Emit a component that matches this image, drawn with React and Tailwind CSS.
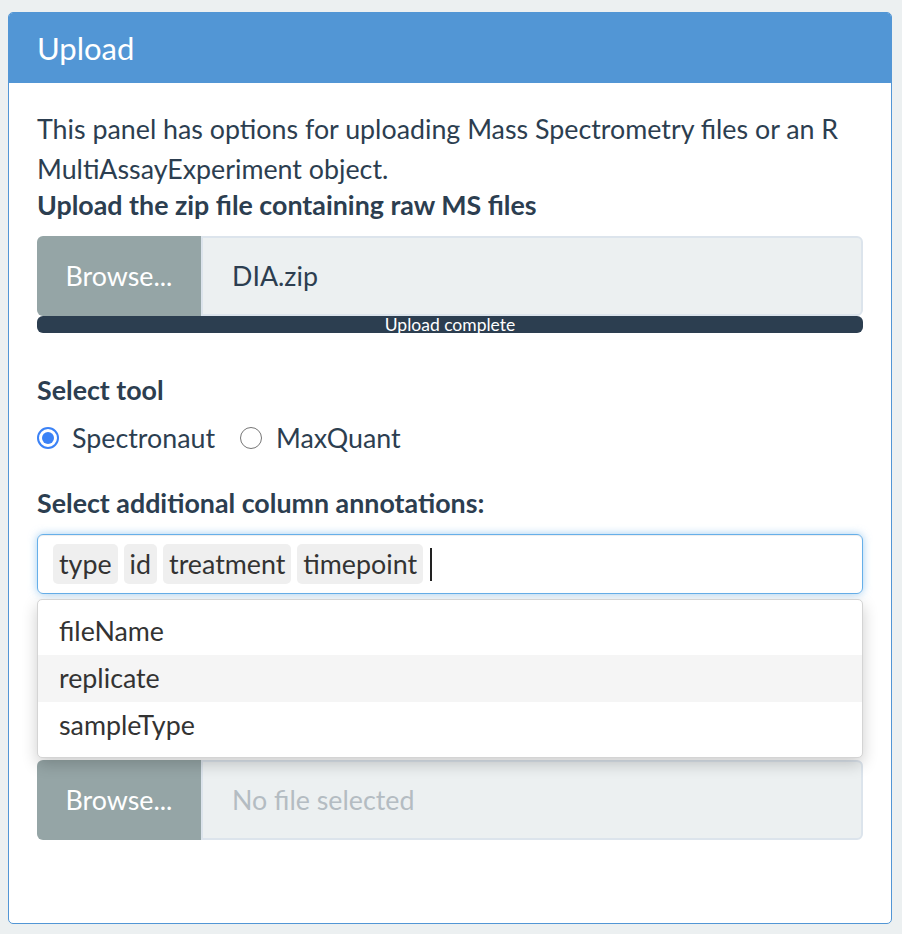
export default function App() {
  const font = { fontFamily: "Lato, 'Noto Sans', sans-serif" };
  return (
    <div className="min-h-[934px] w-[902px] bg-[#ecf0f1] pt-[12px] pl-[8px] text-[#2c3e50]" style={font}>
      <div className="w-[884px] h-[912px] rounded-[5px] border border-[#5296d5] bg-white overflow-hidden flex flex-col">
        <div className="h-[70px] shrink-0 bg-[#5296d5] px-[28px] flex items-center text-white text-[31px] leading-none">
          Upload
        </div>
        <div className="px-[28px] pt-[26px] relative flex-1 text-[26.8px]">
          <p className="leading-[40px] m-0">
            This panel has options for uploading Mass Spectrometry files or an R MultiAssayExperiment object.
          </p>
          <div className="leading-[32px] font-bold">Upload the zip file containing raw MS files</div>
          <div className="mt-[15px] flex h-[80px]">
            <div className="w-[164px] bg-[#95a5a6] rounded-l-[6px] flex items-center justify-center text-white">
              Browse...
            </div>
            <div className="flex-1 bg-[#ecf0f1] border-[2px] border-[#dce4ec] rounded-r-[6px] flex items-center pl-[29px] text-[#2c3e50]">
              DIA.zip
            </div>
          </div>
          <div className="h-[17px] rounded-[6px] bg-[#2c3e50] text-white text-[17.5px] leading-[17px] text-center">
            Upload complete
          </div>
          <div className="mt-[41px] leading-[32px] font-bold">Select tool</div>
          <div className="mt-[12px] flex items-center leading-[40px]">
            <span className="w-[22px] h-[22px] rounded-full border-[2px] border-[#3b82f6] flex items-center justify-center">
              <span className="w-[12px] h-[12px] rounded-full bg-[#3b82f6]" />
            </span>
            <span className="ml-[13px]">Spectronaut</span>
            <span className="ml-[25px] w-[22px] h-[22px] rounded-full border-[1.5px] border-[#767676]" />
            <span className="ml-[14px]">MaxQuant</span>
          </div>
          <div className="mt-[29px] leading-[32px] font-bold">Select additional column annotations:</div>
          <div className="mt-[15px] h-[60px] rounded-[6px] border border-[#66afe9] shadow-[inset_0_1px_1px_rgba(0,0,0,0.075),0_0_8px_rgba(102,175,233,0.6)] flex items-center pl-[15px] gap-[6px] text-[#333]">
            <span className="h-[40px] px-[6px] rounded-[5px] bg-[#efefef] flex items-center">type</span>
            <span className="h-[40px] px-[6px] rounded-[5px] bg-[#efefef] flex items-center">id</span>
            <span className="h-[40px] px-[6px] rounded-[5px] bg-[#efefef] flex items-center">treatment</span>
            <span className="h-[40px] px-[6px] rounded-[5px] bg-[#efefef] flex items-center">timepoint</span>
            <span className="ml-[1px] w-[2px] h-[33px] bg-[#222]" />
          </div>
          <div className="h-[166px]" />
          <div className="flex h-[80px]">
            <div className="w-[164px] bg-[#95a5a6] rounded-l-[6px] flex items-center justify-center text-white">
              Browse...
            </div>
            <div className="flex-1 bg-[#ecf0f1] border-[2px] border-[#dce4ec] rounded-r-[6px] flex items-center pl-[29px] text-[#b4bcc2]">
              No file selected
            </div>
          </div>
          <div className="absolute left-[28px] right-[28px] top-[516px] h-[159px] bg-white rounded-[5px] border border-[#d4d4d4] shadow-[0_6px_16px_rgba(0,0,0,0.2)] py-[8px] text-[#333]">
            <div className="h-[47px] flex items-center pl-[21px]">fileName</div>
            <div className="h-[47px] flex items-center pl-[21px] bg-[#f5f5f5]">replicate</div>
            <div className="h-[47px] flex items-center pl-[21px]">sampleType</div>
          </div>
        </div>
      </div>
    </div>
  );
}
